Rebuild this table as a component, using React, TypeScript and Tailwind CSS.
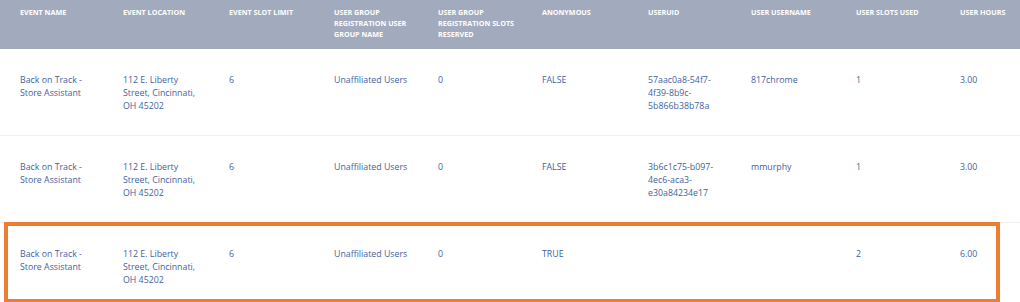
const COLS = [
  "Event Name",
  "Event Location",
  "Event Slot Limit",
  "User Group Registration User Group Name",
  "User Group Registration Slots Reserved",
  "Anonymous",
  "UserUID",
  "User Username",
  "User Slots Used",
  "User Hours",
];

// column widths, taken from where each column's text starts
const WIDTHS = [
  "w-[123px]",
  "w-[106px]",
  "w-[105px]",
  "w-[104px]",
  "w-[104px]",
  "w-[106px]",
  "w-[103px]",
  "w-[105px]",
  "w-[104px]",
  "w-[104px]",
];

type Row = string[];

const ROWS: Row[] = [
  [
    "Back on Track - Store Assistant",
    "112 E. Liberty Street, Cincinnati, OH 45202",
    "6",
    "Unaffiliated Users",
    "0",
    "FALSE",
    "57aac0a8-54f7-4f39-8b9c-5b866b38b78a",
    "817chrome",
    "1",
    "3.00",
  ],
  [
    "Back on Track - Store Assistant",
    "112 E. Liberty Street, Cincinnati, OH 45202",
    "6",
    "Unaffiliated Users",
    "0",
    "FALSE",
    "3b6c1c75-b097-4ec6-aca3-e30a84234e17",
    "mmurphy",
    "1",
    "3.00",
  ],
  [
    "Back on Track - Store Assistant",
    "112 E. Liberty Street, Cincinnati, OH 45202",
    "6",
    "Unaffiliated Users",
    "0",
    "TRUE",
    "",
    "",
    "2",
    "6.00",
  ],
];

function Cell({ i, children }: { i: number; children: React.ReactNode }) {
  return (
    <div className={`${WIDTHS[i]} shrink-0 ${i === 0 ? "pl-[20px] pr-[24px]" : "pr-[24px]"} break-words`}>
      {children}
    </div>
  );
}

export default function App() {
  return (
    <div
      className="w-[1020px] h-[302px] overflow-hidden bg-white"
      style={{ fontFamily: '"Open Sans", "Noto Sans", sans-serif' }}
    >
      <div className="w-[1070px]">
        {/* header */}
        <div className="flex h-[49px] bg-[#a2aabd] pt-[7px] text-[7.2px] leading-[11px] font-bold uppercase text-white">
          {COLS.map((c, i) => (
            <Cell key={c} i={i}>
              {c}
            </Cell>
          ))}
        </div>

        {ROWS.map((r, i) => (
          <div
            key={i}
            className="relative flex h-[87px] border-b border-[#eef0f2] pt-[25px] text-[8.8px] leading-[13px] text-[#3f5f9e]"
          >
            {r.map((v, j) => (
              <Cell key={j} i={j}>
                {v}
              </Cell>
            ))}
            {i === 2 && (
              <div className="absolute left-[4px] top-[-1px] w-[996px] h-[81px] border-4 border-[#ed7d31]" />
            )}
          </div>
        ))}
      </div>
    </div>
  );
}
